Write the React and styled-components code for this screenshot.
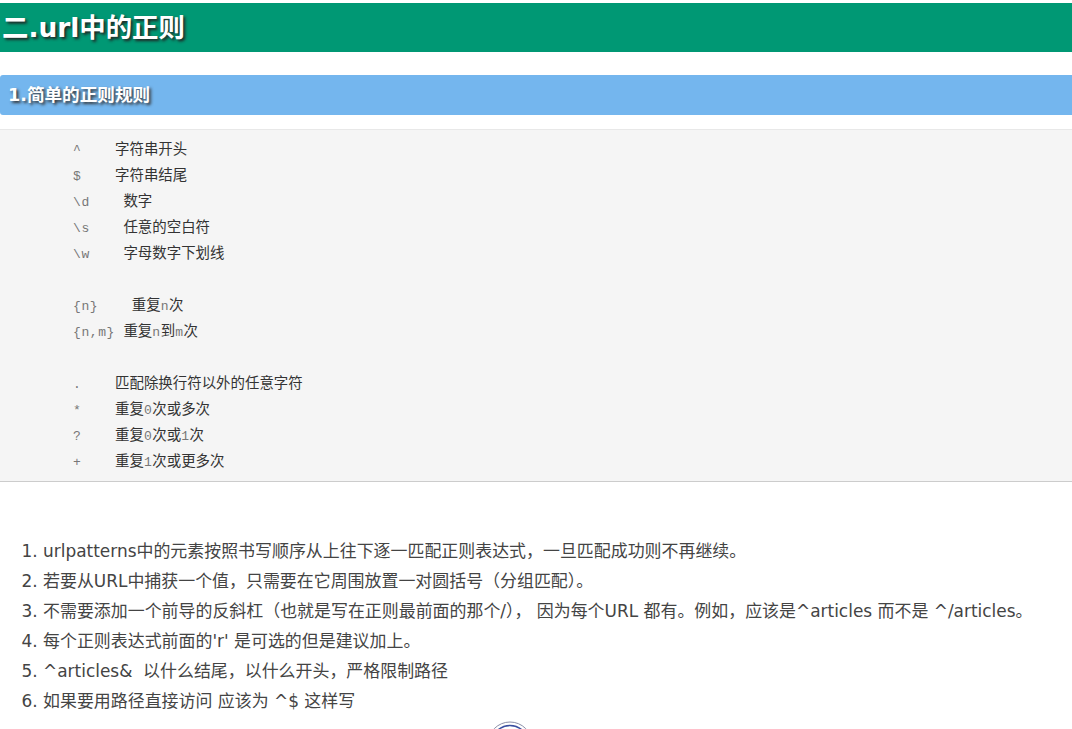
import styled, { createGlobalStyle } from "styled-components";

const GlobalStyle = createGlobalStyle`
  html, body {
    margin: 0;
    padding: 0;
    background: #fff;
    overflow: hidden;
  }
`;

const Page = styled.div`
  height: 729px;
  overflow: hidden;
  padding-top: 3px;
  box-sizing: border-box;
  font-family: "DejaVu Sans", "Noto Sans CJK SC", sans-serif;
`;

const Title = styled.h1`
  margin: 0;
  height: 49px;
  padding-left: 2px;
  background: #009874;
  color: #fff;
  font-size: 26.4px;
  font-weight: 700;
  line-height: 50px;
  text-shadow: 2px 2px 3px #222;
`;

const SubTitle = styled.h2`
  margin: 23px 0 0;
  height: 40px;
  padding-left: 8px;
  background: #74b6ee;
  border-radius: 3px 0 0 3px;
  color: #fff;
  font-size: 17.6px;
  font-weight: 700;
  line-height: 40px;
  text-shadow: 2px 2px 3px #333;
`;

const Code = styled.pre`
  margin: 14px 0 0;
  height: 353px;
  box-sizing: border-box;
  padding: 8px 0 0 73px;
  background: #f5f5f5;
  border-top: 1px solid #e8e8e8;
  border-bottom: 1px solid #ccc;
  color: #777;
  font-family: "Liberation Mono", monospace;
  font-size: 13px;
  letter-spacing: 0.6px;
`;

const CodeRow = styled.div`
  height: 26px;
  line-height: 26px;
`;

const Han = styled.span`
  color: #333;
  font-family: "Noto Sans CJK SC", sans-serif;
  font-size: 14.45px;
  letter-spacing: 0;
  line-height: 1;
`;

const Notes = styled.ol`
  margin: 54px 0 0;
  padding: 0 0 0 43px;
  color: #444;
  font-size: 16.95px;
`;

const Note = styled.li`
  height: 30px;
  line-height: 30px;
  white-space: pre;
`;

const Stamp = styled.svg`
  display: block;
  margin: 5px 0 0 487px;
`;

const codeRows = [
  ["^    ", "字符串开头"],
  ["$    ", "字符串结尾"],
  ["\\d    ", "数字"],
  ["\\s    ", "任意的空白符"],
  ["\\w    ", "字母数字下划线"],
  [],
  ["{n}    ", "重复", "n", "次"],
  ["{n,m} ", "重复", "n", "到", "m", "次"],
  [],
  [".    ", "匹配除换行符以外的任意字符"],
  ["*    ", "重复", "0", "次或多次"],
  ["?    ", "重复", "0", "次或", "1", "次"],
  ["+    ", "重复", "1", "次或更多次"],
];

const notes = [
  "urlpatterns中的元素按照书写顺序从上往下逐一匹配正则表达式，一旦匹配成功则不再继续。",
  "若要从URL中捕获一个值，只需要在它周围放置一对圆括号（分组匹配）。",
  "不需要添加一个前导的反斜杠（也就是写在正则最前面的那个/）， 因为每个URL 都有。例如，应该是^articles 而不是 ^/articles。",
  "每个正则表达式前面的'r' 是可选的但是建议加上。",
  "^articles&  以什么结尾，以什么开头，严格限制路径",
  "如果要用路径直接访问 应该为 ^$ 这样写",
];

export default function App() {
  return (
    <Page>
      <GlobalStyle />
      <Title>二.url中的正则</Title>
      <SubTitle>1.简单的正则规则</SubTitle>
      <Code>
        {codeRows.map((row, i) => (
          <CodeRow key={i}>
            {row.map((part, j) =>
              j % 2 === 1 ? <Han key={j}>{part}</Han> : part
            )}
          </CodeRow>
        ))}
      </Code>
      <Notes>
        {notes.map((note) => (
          <Note key={note}>{note}</Note>
        ))}
      </Notes>
      <Stamp width="46" height="46" viewBox="0 0 46 46" fill="none">
        <circle cx="23" cy="23" r="22" stroke="#8a8fa8" strokeWidth="1" />
        <circle cx="23" cy="23" r="18.5" stroke="#3a4fa0" strokeWidth="1.5" />
      </Stamp>
    </Page>
  );
}
